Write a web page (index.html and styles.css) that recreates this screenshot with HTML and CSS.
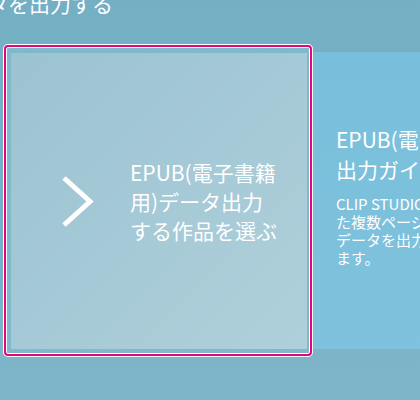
FILE: index.html
```html
<!DOCTYPE html>
<html lang="ja">
<head>
  <meta charset="UTF-8" />
  <meta name="viewport" content="width=device-width, initial-scale=1.0" />
  <title>EPUB(電子書籍用)データを出力する</title>
  <link rel="stylesheet" href="styles.css">
</head>
<body>

  <!-- Page title (scrolled, only the tail is visible) -->
  <div class="page-title">
    <h1>EPUB(電子書籍用)データを出力する</h1>
  </div>

  <!-- Step cards -->
  <div class="cards">
    <div class="card-frame">
      <a class="card card-step" href="#">
        <svg class="chevron" width="40" height="56" viewBox="0 0 40 56" aria-hidden="true">
          <polyline points="2,5 28,28.5 2,52" fill="none" stroke="#fff" stroke-width="5" stroke-linejoin="miter" />
        </svg>
        <span class="card-step-text">EPUB(電子書籍<br>用)データ出力<br>する作品を選ぶ</span>
      </a>
    </div>

    <div class="card card-guide">
      <h2>EPUB(電子書籍)データ<br>出力ガイド</h2>
      <p>CLIP STUDIO PAINTで作成し<br>た複数ページ作品からEPUB<br>データを出力する方法を紹介し<br>ます。</p>
    </div>
  </div>

</body>
</html>
```

FILE: styles.css
```css
/* Base */
html, body {
  margin: 0;
  height: 100%;
}
body {
  font-family: "Noto Sans CJK JP", "Noto Sans", sans-serif;
  color: #fff;
  background: linear-gradient(to bottom, #74afc3 0%, #76b1c5 60%, #80b6c9 100%);
  overflow: hidden;
}

/* Title - right aligned so the end of the heading shows */
.page-title {
  width: 113px;
  height: 44px;
  display: flex;
  justify-content: flex-end;
  overflow: hidden;
}
.page-title h1 {
  margin: -12px 0 0;
  font-size: 21px;
  font-weight: normal;
  line-height: 30px;
  white-space: nowrap;
}

/* Card row */
.cards {
  display: flex;
  align-items: flex-start;
  padding-left: 4px;
}
.card {
  box-sizing: border-box;
  width: 296px;
  height: 296px;
  color: #fff;
  text-decoration: none;
}

/* Selected card: pink ring with thin white lines */
.card-frame {
  margin-top: 1px;
  padding: 6px 3px 5px 5px;
  background: #80b9cb;
  border: 2px solid #e2077e;
  border-radius: 4px;
  box-shadow: 0 0 0 1px #fff, inset 0 0 0 1px #fff;
}
.card-step {
  display: flex;
  align-items: center;
  padding-left: 51px;
  background: linear-gradient(135deg, #9cc3d1 0%, #a5c9d6 50%, #afd0da 100%);
}
.chevron {
  display: block;
  flex-shrink: 0;
}
.card-step-text {
  margin-left: 28px;
  font-size: 21px;
  line-height: 29px;
  white-space: nowrap;
}

/* Guide card */
.card-guide {
  margin: 8px 0 0 1px;
  width: 320px;
  height: 297px;
  padding: 72px 0 0 23px;
  background: linear-gradient(to bottom, #79bfdb, #7fc2dd);
  white-space: nowrap;
}
.card-guide h2 {
  margin: 0 0 11px;
  font-size: 21px;
  font-weight: normal;
  line-height: 30px;
}
.card-guide p {
  margin: 0;
  font-size: 15px;
  line-height: 18px;
}
```
